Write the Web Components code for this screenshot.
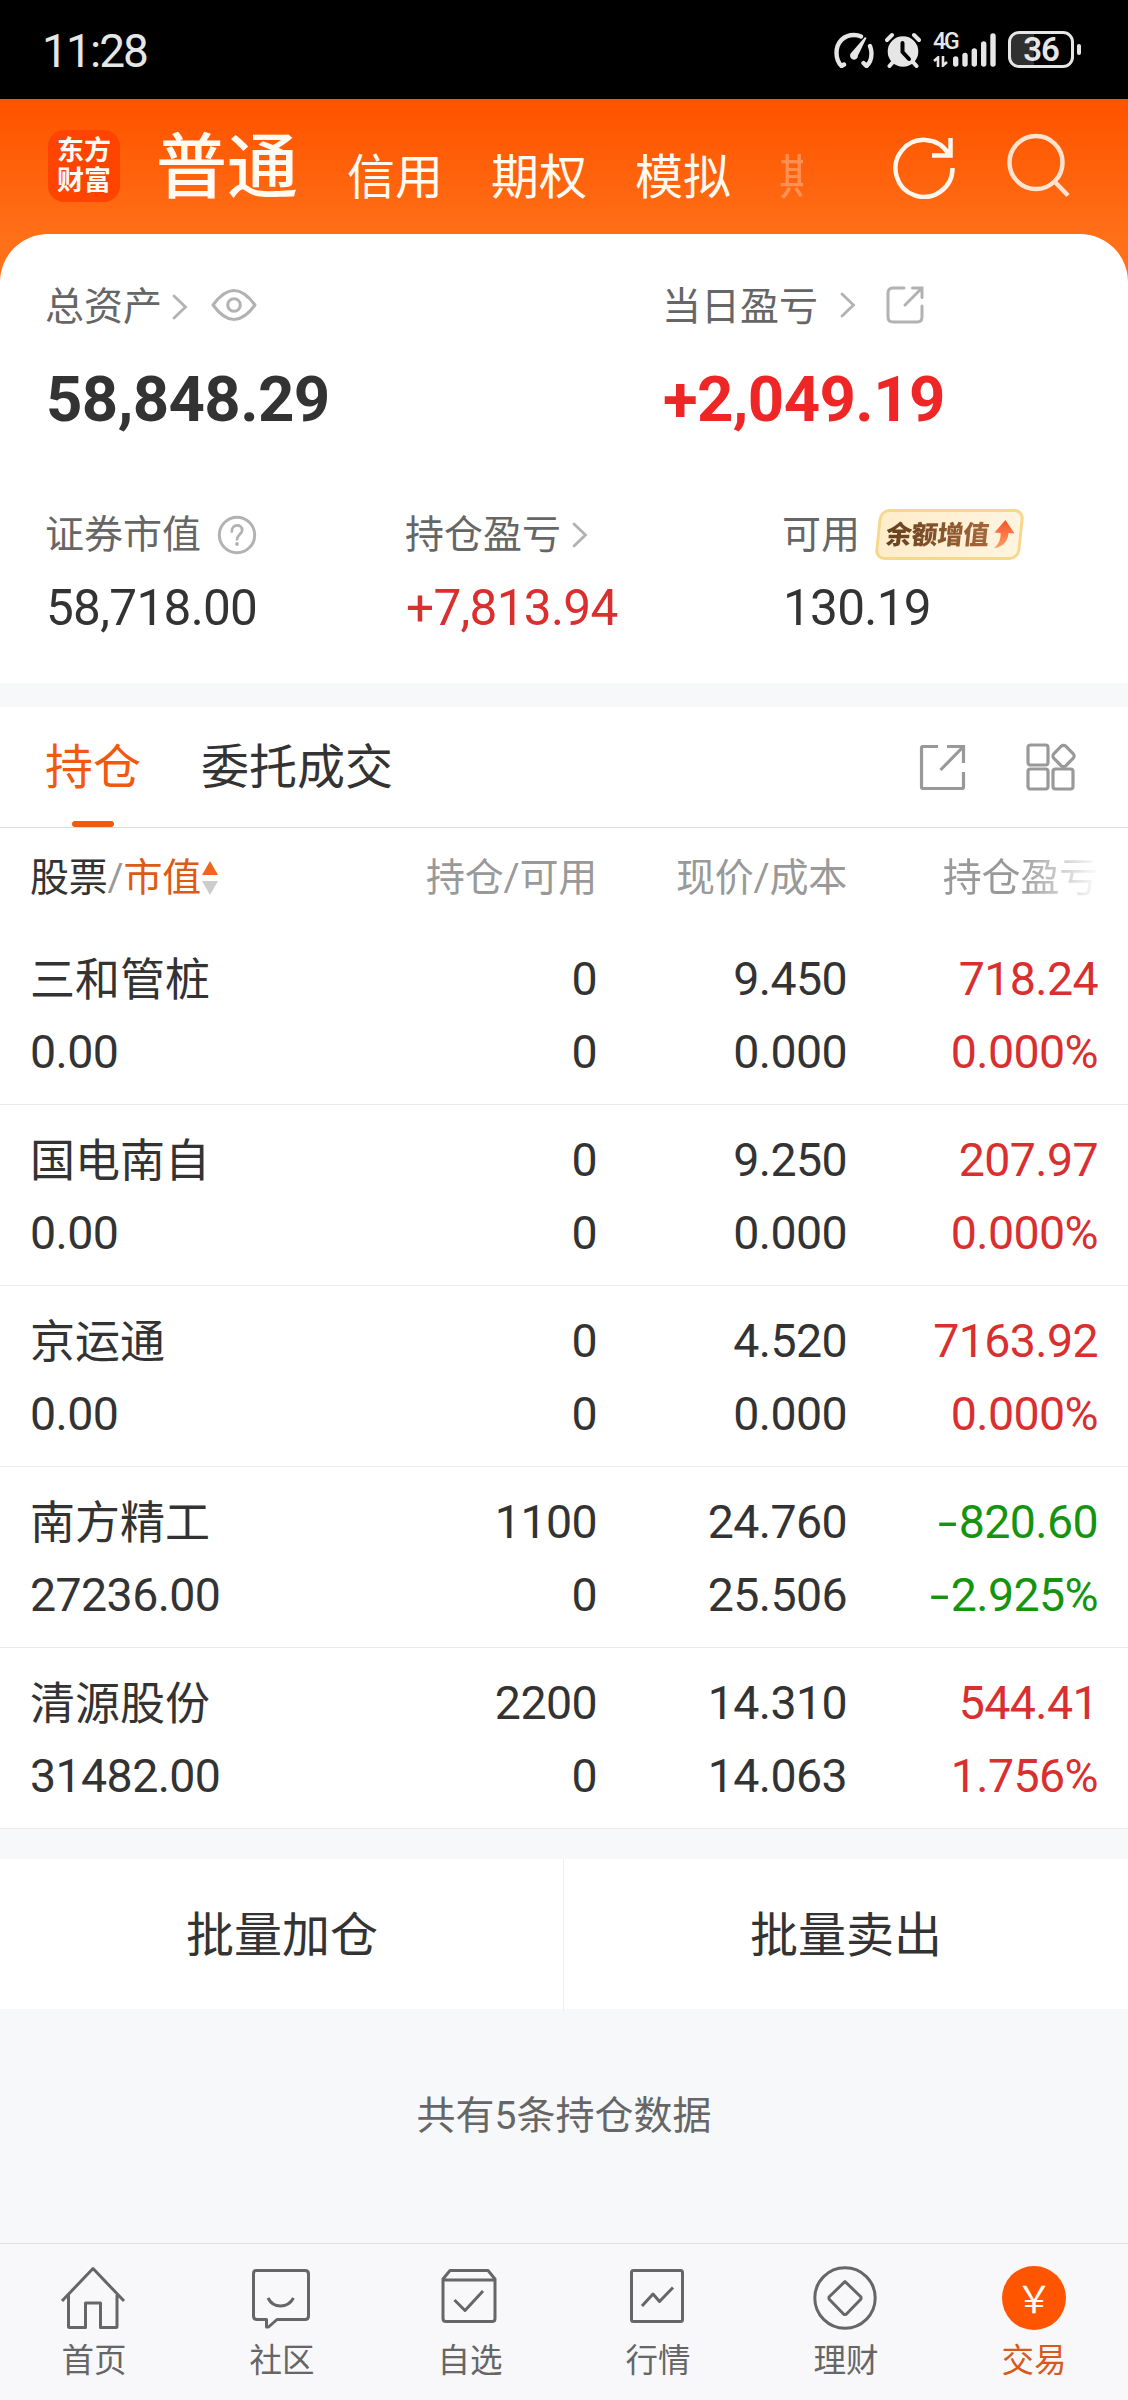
<!DOCTYPE html>
<html lang="zh-CN">
<head>
<meta charset="utf-8">
<meta name="viewport" content="width=device-width">
<title>交易</title>
<style>
  body {
    margin: 0;
    width: 1128px;
    background: #f7f8fa;
    color: #333;
    font-family: Roboto, "Noto Sans CJK SC", sans-serif;
  }
</style>
</head>
<body>
<trade-page></trade-page>

<script>
// Every icon: [width, height, content]
const ICONS = {
  speed: [40, 36, `<g fill="none" stroke="#e6e6e6" stroke-width="4.4" stroke-linecap="round"><path d="M10 32.5L7.500 34C3.500 30 2.500 26 2.500 21C2.500 10 10 3 20 3Q24 3 27 4.500M36 14Q37.500 18 37.500 21C37.500 27 36 31 32.500 34L29.500 31"/></g><path d="M32.500 6L24 23.500A4 4 0 1 1 17.500 20.500L31 5Z" fill="#e6e6e6"/>`],
  alarm: [36, 36, `<circle cx="18" cy="19.500" r="15.300" fill="#e6e6e6"/><path d="M2 8L7 3M34 8L29 3M8 30L4.500 34M28 30L31.500 34" stroke="#e6e6e6" stroke-width="4" stroke-linecap="round"/><path d="M17.500 11V20L24 27" fill="none" stroke="#000" stroke-width="4" stroke-linecap="round" stroke-linejoin="round"/>`],
  data: [15, 11, `<path d="M1 5L5 1.500V11M10 0V9.500L14 6" fill="none" stroke="#e6e6e6" stroke-width="2.600"/>`],
  signal: [43, 34, `<path d="M2.700 26V31M12 22.500V31M21.300 18V31M30.700 11V31M40 3V31" stroke="#e6e6e6" stroke-width="5.400" stroke-linecap="round"/>`],
  refresh: [64, 64, `<path d="M59.500 33A28.500 28.500 0 1 1 55 18M57.500 3V20.500H39" fill="none" stroke="#fff7ef" stroke-width="4.500"/>`],
  search: [65, 65, `<g fill="none" stroke="#ffe3cf" stroke-width="4.500"><circle cx="30" cy="29.500" r="26.500"/><path d="M48.500 48.500L62 62.500"/></g>`],
  chevron: [16, 26, `<path d="M2 2L13.500 13L2 24" fill="none" stroke="#b2b2b2" stroke-width="2.800" stroke-linecap="round"/>`],
  eye: [46, 32, `<g fill="none" stroke="#b2b2b2" stroke-width="3"><path d="M2 16C10 5 17 1.500 23 1.500S36 5 44 16C36 27 29 30.500 23 30.500S10 27 2 16Z" stroke-linejoin="round"/><circle cx="23" cy="16" r="6.300"/></g>`],
  shareRound: [38, 38, `<path d="M18 2H7Q2 2 2 7V31Q2 36 7 36H31Q36 36 36 31V20M19 19L35.500 2.500M26.500 2H36V11.500" fill="none" stroke="#b2b2b2" stroke-width="3" stroke-linecap="round"/>`],
  help: [40, 40, `<circle cx="20" cy="20" r="17.700" fill="none" stroke="#b2b2b2" stroke-width="3"/><path d="M14.800 16.500C14.800 8.500 25.200 8.500 25.200 15.200C25.200 19 20 19.500 20 24.300" fill="none" stroke="#b2b2b2" stroke-width="2.800" stroke-linecap="round"/><circle cx="20" cy="29" r="1.900" fill="#b2b2b2"/>`],
  share: [47, 47, `<path d="M19 2.500H4Q2.500 2.500 2.500 4V43Q2.500 44.500 4 44.500H43Q44.500 44.500 44.500 43V28M21.500 26L43 4M28 2.500H44.500V19" fill="none" stroke="#999" stroke-width="3.200"/>`],
  grid: [50, 48, `<g fill="none" stroke="#999" stroke-width="3.200"><rect x="2" y="2" width="20" height="20" rx="2.500"/><rect x="2" y="26" width="20" height="20" rx="2.500"/><rect x="27" y="26" width="20" height="20" rx="2.500"/><rect x="29" y="4.500" width="17" height="17" rx="3.500" transform="rotate(45 37.500 13)"/></g>`],
  sort: [16, 36, `<path d="M8 1L16 15H0Z" fill="#f26419"/><path d="M0 21H16L8 35Z" fill="#ccc"/>`],
  rise: [22, 28, `<defs><linearGradient id="g" x1="0" y1="0" x2="0" y2="1"><stop offset="0" stop-color="#f8512b"/><stop offset="1" stop-color="#ff9d61"/></linearGradient></defs><path d="M12.500 0L21.500 13.500L15.500 13C15 21 10 27 1 28C6 24 8 19 7.500 13L1.500 12.500Z" fill="url(#g)"/>`],
  home: [66, 64, `<path d="M2 35L33 2.500L64 35M8.500 29V60.500Q8.500 61.500 9.500 61.500H25.500V37H40.500V61.500H56Q57 61.500 57 60.500V29"/>`],
  talk: [66, 64, `<path d="M8 4.500H57Q60.500 4.500 60.500 8V50Q60.500 53.500 57 53.500H29L20.500 61H18.500V53.500H9Q5.500 53.500 5.500 50V8Q5.500 4.500 8 4.500ZM20 32Q24 40 32.500 40T45.500 32"/>`],
  pick: [66, 64, `<path d="M7 14H59V52.500Q59 55.500 56 55.500H10Q7 55.500 7 52.500V13L14 4.500H52L59 13V16M18.500 34L29 44.500L47 25"/>`],
  chart: [66, 64, `<rect x="7.500" y="4.500" width="51" height="51" rx="2"/><path d="M18 40L29 28L35.500 35.500L49 21.500"/>`],
  wealth: [66, 64, `<circle cx="33" cy="32" r="30.200"/><path d="M33 15.500L49 31L49 33L34 48.500H32L17 33V31Z"/>`],
};

class UiIcon extends HTMLElement {
  connectedCallback() {
    const [w, h, body] = ICONS[this.getAttribute('name')];
    this.attachShadow({ mode: 'open' }).innerHTML = `
      <style>
        :host { display: block; flex: none; width: ${w}px; height: ${h}px; }
        svg { display: block; }
      </style>
      <svg width="${w}" height="${h}" viewBox="0 0 ${w} ${h}">${body}</svg>`;
  }
}
customElements.define('ui-icon', UiIcon);

class StatusBar extends HTMLElement {
  connectedCallback() {
    this.attachShadow({ mode: 'open' }).innerHTML = `
      <style>
        :host { display: flex; align-items: center; height: 99px; padding: 0 47px 0 42px; background: #000; color: #e6e6e6; box-sizing: border-box; }
        .time { flex: 1; font-size: 46px; line-height: 60px; letter-spacing: -1.9px; margin-top: 2px; }
        .alarm { margin: 0 12px 0 11px; }
        .net { display: flex; align-items: flex-end; height: 34px; }
        .gen { width: 20px; }
        .gen span { display: block; font-size: 23px; font-weight: 500; line-height: 17px; height: 23px; letter-spacing: -2px; white-space: nowrap; }
        .battery { position: relative; display: flex; align-items: center; justify-content: center; width: 66px; height: 37px; margin: 0 3px 0 12px; border: 3px solid #e6e6e6; border-radius: 11px; box-sizing: border-box; font-size: 33px; font-weight: 600; letter-spacing: -1px; background: linear-gradient(90deg, #303030 23px, #000 23px); }
        .nub { width: 4px; height: 11px; border-radius: 2px; background: #e6e6e6; }
      </style>
      <span class="time">11:28</span>
      <ui-icon name="speed"></ui-icon>
      <ui-icon name="alarm" class="alarm"></ui-icon>
      <div class="net">
        <div class="gen"><span>4G</span><ui-icon name="data"></ui-icon></div>
        <ui-icon name="signal"></ui-icon>
      </div>
      <div class="battery">36</div>
      <div class="nub"></div>`;
  }
}
customElements.define('status-bar', StatusBar);

class AppHeader extends HTMLElement {
  connectedCallback() {
    this.attachShadow({ mode: 'open' }).innerHTML = `
      <style>
        :host { display: flex; align-items: flex-start; height: 186px; padding: 31px 57px 0 48px; box-sizing: border-box; background: linear-gradient(#ff5500 8%, #ff7018 75%); color: #fffaf2; }
        .logo { width: 72px; height: 72px; padding-top: 6px; box-sizing: border-box; border-radius: 16px; background: #ff4400; font-size: 27px; font-weight: 700; line-height: 30px; text-align: center; }
        nav { display: flex; align-items: flex-start; flex: 1; margin-left: 36px; font-size: 48px; line-height: 60px; white-space: nowrap; }
        nav span { margin: 18px 48px 0 0; }
        nav .on { margin: 2px 49px 0 0; font-size: 71px; font-weight: 500; line-height: 72px; }
        nav .cut { width: 24px; margin: 18px 0 0; overflow: hidden; opacity: .3; }
        .refresh { margin: 5px 49px 0 0; }
        .search { margin-top: 3px; }
      </style>
      <div class="logo">东方<br>财富</div>
      <nav>
        <span class="on">普通</span><span>信用</span><span>期权</span><span>模拟</span><span class="cut">期</span>
      </nav>
      <ui-icon class="refresh" name="refresh"></ui-icon>
      <ui-icon class="search" name="search"></ui-icon>`;
  }
}
customElements.define('app-header', AppHeader);

// Label with its icons in the slot, and the amount below
class AssetItem extends HTMLElement {
  connectedCallback() {
    this.attachShadow({ mode: 'open' }).innerHTML = `
      <style>
        :host { display: block; }
        .label { display: flex; align-items: center; height: 60px; font-size: 39px; line-height: 60px; color: #666; white-space: nowrap; }
        .label > span { transform: translate(-1px, 2px); }
        .value { margin-top: 15px; font-size: 49.5px; line-height: 60px; letter-spacing: -.7px; }
        :host([big]) .value { margin-top: 30px; font-size: 63.5px; line-height: 70px; font-weight: 700; letter-spacing: -.6px; }
        :host([up]) .value { color: #d92f2f; }
        :host([up][big]) .value { color: #ee2626; }
      </style>
      <div class="label"><span>${this.getAttribute('label')}</span><slot></slot></div>
      <div class="value">${this.getAttribute('value')}</div>`;
  }
}
customElements.define('asset-item', AssetItem);

class GrowBadge extends HTMLElement {
  connectedCallback() {
    this.attachShadow({ mode: 'open' }).innerHTML = `
      <style>
        :host { display: flex; align-items: center; position: relative; width: 149px; height: 51px; padding-left: 11px; box-sizing: border-box; z-index: 0; }
        :host::before { content: ""; position: absolute; inset: 0 2px; z-index: -1; border: 3px solid #f7d78c; border-radius: 10px; background: linear-gradient(90deg, #ffedca, #fff4e0); transform: skewX(-6deg); }
        span { font-size: 26px; font-weight: 900; line-height: 30px; letter-spacing: -.3px; transform: translateY(1px) skewX(-6deg); background: linear-gradient(90deg, #64401f, #a5673a); -webkit-background-clip: text; color: transparent; }
        ui-icon { margin-left: 4px; }
      </style>
      <span><slot></slot></span><ui-icon name="rise"></ui-icon>`;
  }
}
customElements.define('grow-badge', GrowBadge);

class AssetPanel extends HTMLElement {
  connectedCallback() {
    this.attachShadow({ mode: 'open' }).innerHTML = `
      <style>
        :host { display: block; height: 449px; margin-top: -51px; padding: 41px 0 0 46px; box-sizing: border-box; border-radius: 48px 48px 0 0; background: #fff; }
        .top, .bottom { display: grid; }
        .top { grid-template-columns: 617px 1fr; }
        .bottom { grid-template-columns: 360px 377px 1fr; margin-top: 68px; }
      </style>
      <div class="top">
        <asset-item big label="总资产" value="58,848.29">
          <ui-icon name="chevron" style="margin: 4px 0 0 9px"></ui-icon>
          <ui-icon name="eye" style="margin-left: 23px"></ui-icon>
        </asset-item>
        <asset-item big up label="当日盈亏" value="+2,049.19">
          <ui-icon name="chevron" style="margin-left: 21px"></ui-icon>
          <ui-icon name="shareRound" style="margin-left: 30px"></ui-icon>
        </asset-item>
      </div>
      <div class="bottom">
        <asset-item label="证券市值" value="58,718.00">
          <ui-icon name="help" style="margin: 3px 0 0 15px"></ui-icon>
        </asset-item>
        <asset-item up label="持仓盈亏" value="+7,813.94">
          <ui-icon name="chevron" style="margin: 3px 0 0 10px"></ui-icon>
        </asset-item>
        <asset-item label="可用" value="130.19">
          <grow-badge style="margin: 2px 0 0 14px">余额增值</grow-badge>
        </asset-item>
      </div>`;
  }
}
customElements.define('asset-panel', AssetPanel);

class PositionTabs extends HTMLElement {
  connectedCallback() {
    this.attachShadow({ mode: 'open' }).innerHTML = `
      <style>
        :host { display: flex; align-items: center; height: 121px; margin-top: 24px; padding: 0 52px 0 45px; box-sizing: border-box; border-bottom: 1px solid #ddd; background: #fff; font-size: 48px; line-height: 121px; }
        span { position: relative; height: 120px; margin-right: 60px; }
        .on { color: #f15a0e; }
        .on::after { content: ""; position: absolute; left: 27px; bottom: 0; width: 42px; height: 6px; border-radius: 3px; background: #f15a0e; }
        .share { margin: 0 60px 0 auto; }
      </style>
      <span class="on">持仓</span><span>委托成交</span>
      <ui-icon class="share" name="share"></ui-icon>
      <ui-icon name="grid"></ui-icon>`;
  }
}
customElements.define('position-tabs', PositionTabs);

const COLUMNS = '280px 287px 250px 251px';

class StockHead extends HTMLElement {
  connectedCallback() {
    this.attachShadow({ mode: 'open' }).innerHTML = `
      <style>
        :host { display: grid; grid-template-columns: ${COLUMNS}; height: 96px; padding-left: 30px; box-sizing: border-box; background: #fff; font-size: 39px; line-height: 100px; letter-spacing: -.2px; color: #999; text-align: right; white-space: nowrap; }
        .first { display: flex; align-items: center; text-align: left; }
        b { font-weight: 400; color: #333; }
        em { font-style: normal; color: #dd5a14; }
        ui-icon { margin-left: 1px; }
        .fade { -webkit-mask: linear-gradient(90deg, #000 68%, transparent 101%); }
      </style>
      <div class="first"><b>股票</b>/<em>市值</em><ui-icon name="sort"></ui-icon></div>
      <div>持仓/可用</div>
      <div>现价/成本</div>
      <div class="fade">持仓盈亏</div>`;
  }
}
customElements.define('stock-head', StockHead);

class StockRow extends HTMLElement {
  connectedCallback() {
    const get = name => this.getAttribute(name);
    // The minus is drawn wider than the hyphen of the font
    const signed = name => get(name).replace('-', '<i>-</i>');
    this.attachShadow({ mode: 'open' }).innerHTML = `
      <style>
        :host { display: grid; grid-template-columns: ${COLUMNS}; grid-auto-rows: 73px; height: 181px; padding: 19px 0 0 30px; box-sizing: border-box; border-bottom: 1px solid #ebebeb; background: #fff; font-size: 46.5px; line-height: 73px; letter-spacing: -.6px; text-align: right; }
        .left { text-align: left; }
        .name { font-size: 45px; letter-spacing: 0; transform: translateY(1px); }
        .pl { color: #d92f2f; }
        :host([down]) .pl { color: #14940f; }
        i { display: inline-block; margin-right: 5px; font-style: normal; transform: scaleX(1.5); }
      </style>
      <div class="left name">${get('name')}</div><div>${get('hold')}</div><div>${get('price')}</div><div class="pl">${signed('profit')}</div>
      <div class="left">${get('worth')}</div><div>${get('free')}</div><div>${get('cost')}</div><div class="pl">${signed('rate')}</div>`;
  }
}
customElements.define('stock-row', StockRow);

class BatchActions extends HTMLElement {
  connectedCallback() {
    this.attachShadow({ mode: 'open' }).innerHTML = `
      <style>
        :host { display: grid; grid-template-columns: 1fr 1fr; height: 150px; margin-top: 30px; background: #fff; font-size: 48px; line-height: 153px; text-align: center; }
        div + div { border-left: 1px solid #eee; margin-left: -1px; }
      </style>
      <div>批量加仓</div>
      <div>批量卖出</div>`;
  }
}
customElements.define('batch-actions', BatchActions);

class NavItem extends HTMLElement {
  connectedCallback() {
    const icon = this.getAttribute('icon');
    this.attachShadow({ mode: 'open' }).innerHTML = `
      <style>
        :host { display: flex; flex-direction: column; align-items: center; font-size: 32.5px; line-height: 44px; color: #666; }
        ui-icon { fill: none; stroke: #666; stroke-width: 3; stroke-linejoin: round; transform: translateX(-1px); }
        .coin { width: 64px; height: 64px; border-radius: 50%; background: #ff5500; color: #fff; font: 37px/62px "Noto Sans CJK SC", sans-serif; text-align: center; }
        span { margin-top: 9px; }
        :host([on]) span { color: #d75a1c; }
      </style>
      ${icon ? `<ui-icon name="${icon}"></ui-icon>` : '<div class="coin">￥</div>'}
      <span><slot></slot></span>`;
  }
}
customElements.define('nav-item', NavItem);

class NavBar extends HTMLElement {
  connectedCallback() {
    this.attachShadow({ mode: 'open' }).innerHTML = `
      <style>
        :host { display: grid; grid-template-columns: repeat(6, 1fr); height: 157px; padding-top: 22px; box-sizing: border-box; border-top: 1px solid #e2e2e4; background: #f8f8fb; }
      </style>
      <nav-item icon="home">首页</nav-item>
      <nav-item icon="talk">社区</nav-item>
      <nav-item icon="pick">自选</nav-item>
      <nav-item icon="chart">行情</nav-item>
      <nav-item icon="wealth">理财</nav-item>
      <nav-item on>交易</nav-item>`;
  }
}
customElements.define('nav-bar', NavBar);

class TradePage extends HTMLElement {
  connectedCallback() {
    this.attachShadow({ mode: 'open' }).innerHTML = `
      <style>
        :host { display: flex; flex-direction: column; height: 2400px; overflow: hidden; }
        .total { flex: 1; padding-top: 77px; font-size: 39px; line-height: 60px; color: #666; text-align: center; }
      </style>
      <status-bar></status-bar>
      <app-header></app-header>
      <asset-panel></asset-panel>
      <position-tabs></position-tabs>
      <stock-head></stock-head>
      <stock-row name="三和管桩" worth="0.00" hold="0" free="0" price="9.450" cost="0.000" profit="718.24" rate="0.000%"></stock-row>
      <stock-row name="国电南自" worth="0.00" hold="0" free="0" price="9.250" cost="0.000" profit="207.97" rate="0.000%"></stock-row>
      <stock-row name="京运通" worth="0.00" hold="0" free="0" price="4.520" cost="0.000" profit="7163.92" rate="0.000%"></stock-row>
      <stock-row down name="南方精工" worth="27236.00" hold="1100" free="0" price="24.760" cost="25.506" profit="-820.60" rate="-2.925%"></stock-row>
      <stock-row name="清源股份" worth="31482.00" hold="2200" free="0" price="14.310" cost="14.063" profit="544.41" rate="1.756%"></stock-row>
      <batch-actions></batch-actions>
      <div class="total">共有5条持仓数据</div>
      <nav-bar></nav-bar>`;
  }
}
customElements.define('trade-page', TradePage);
</script>
</body>
</html>
